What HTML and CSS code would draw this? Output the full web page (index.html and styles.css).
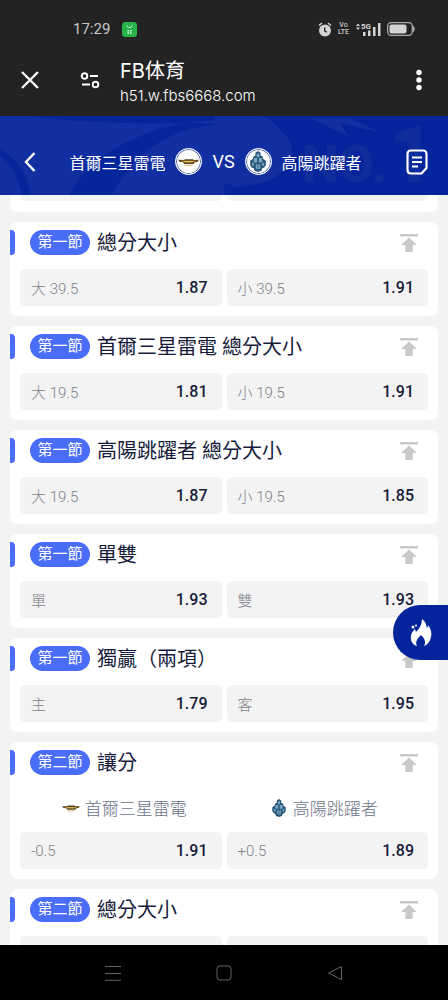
FILE: index.html
```html
<!DOCTYPE html>
<html lang="zh-Hant">
<head>
<meta charset="utf-8">
<meta name="viewport" content="width=device-width, initial-scale=1">
<title>FB体育</title>
<link rel="stylesheet" href="styles.css">
</head>
<body>
<svg class="sprite" aria-hidden="true">
  <symbol id="to-top" viewBox="0 0 20 20"><path d="M1 1h18v2.400H1zM10 4.600l8 7.400h-4.300v7H6.300v-7H2z" fill="#c9c9c9"/></symbol>
  <symbol id="thunders" viewBox="0 0 24 12"><path d="M0 3.500l7 .3 1-1h9l1 1 6-.3-2 2.500-3 .4-1 2H7L6 6.400 2 6z" fill="#57451f"/><path d="M3 4.600l18-.1-2 1.100H5z" fill="#c98a2e"/><path d="M7 5h10v1.500H7z" fill="#e2c25c"/><path d="M7 9h10l-1 1.500H8z" fill="#e9b9a8"/></symbol>
  <symbol id="jumpers" viewBox="0 0 20 24"><path d="M10 0l3 2v3l2 1 1 3 3 2v5l-2 3-2 .5-1 3-4 1.500-4-1.500-1-3L3 19l-2-3v-5l3-2 1-3 2-1V2z" fill="#285579"/><path d="M8.500 3h3v4h-3zM5.500 8H9v5H5zM11 8h3.500l.5 5h-4zM2.500 13l3 1v3l-2-.5zM17.500 13l-3 1v3l2-.5zM7.500 15h2v6l-2-1zM10.500 15h2v5l-2 1z" fill="#79a8c0"/></symbol>
</svg>

<div class="screen">
  <div class="status">
    <div class="status-side">
      <time>17:29</time>
      <svg width="15" height="15" viewBox="0 0 15 15"><rect width="15" height="15" rx="3.500" fill="#27b24a"/><path d="M4.500 3.500l2 2h2l2-2" fill="none" stroke="#d5f5d9" stroke-width="1"/><path d="M5.500 8h1.500v1.500H5.500zM8 8h1.500v1.500H8zM5.500 10.300h1.500v1.500H5.500zM8 10.300h1.500v1.500H8z" fill="#e5fae7"/></svg>
    </div>
    <div class="status-side status-right">
      <svg width="14" height="15" viewBox="0 0 14 15"><circle cx="7" cy="8.500" r="6" fill="#d4d4d4"/><path d="M1 3.500L4 1M13 3.500L10 1" stroke="#d4d4d4" stroke-width="1.500"/><path d="M6.700 5.500v3.300l2 1.500" fill="none" stroke="#232323" stroke-width="1.300"/></svg>
      <span class="volte"><span>Vo</span><span>LTE</span></span>
      <svg width="26" height="15" viewBox="0 0 26 15"><path d="M1 4l2-2.500L5 4zM1 5.500h4L3 8z" fill="#d4d4d4"/><text x="6" y="7" class="net">5G</text><path d="M8 10h2.500v4H8zM13 8.500h2.500V14H13zM18 5h2.500v9H18zM23 1h2.500v13H23z" fill="#d4d4d4"/></svg>
      <svg width="28" height="14" viewBox="0 0 28 14"><rect x=".7" y=".7" width="24.600" height="12.600" rx="3.500" fill="none" stroke="#aaa" stroke-width="1.300"/><rect x="2.500" y="2.500" width="17" height="9" rx="2" fill="#d4d4d4"/><path d="M26.500 4.500q1.500 2.500 0 5z" fill="#aaa" stroke="#aaa"/></svg>
    </div>
  </div>

  <div class="browser">
    <button class="icon-btn" aria-label="關閉"><svg width="20" height="20" viewBox="0 0 20 20"><path d="M2 2l16 16M18 2L2 18" stroke="#fff" stroke-width="2.300"/></svg></button>
    <button class="icon-btn site" aria-label="網站設定"><svg width="20" height="18" viewBox="0 0 20 18"><g fill="none" stroke="#fff" stroke-width="1.900"><circle cx="4.500" cy="5" r="2.800"/><path d="M10 5h8M2 13.500h8"/><circle cx="15.500" cy="13.500" r="2.800"/></g></svg></button>
    <div class="page-id"><div class="page-name">FB体育</div><div class="page-url">h51.w.fbs6668.com</div></div>
    <button class="icon-btn" aria-label="更多"><svg width="8" height="22" viewBox="0 0 8 22"><g fill="#fff"><circle cx="4" cy="3.500" r="2.700"/><circle cx="4" cy="11" r="2.700"/><circle cx="4" cy="18.500" r="2.700"/></g></svg></button>
  </div>

  <header class="match">
    <svg class="match-bg" viewBox="0 0 448 79" preserveAspectRatio="none" aria-hidden="true">
      <rect width="448" height="79" fill="#03249b"/>
      <path d="M0 0h262q13 5 18 14 12 8 12 22 0 14-12 22-10 8-24 10L224 74v5H0z" fill="#112fa0"/>
      <path d="M30 0q60 9 185 7v-7zM70 79q15-37 75-61 35-13 70-14v5Q145 15 112 79zM0 34q24 10 31 45H22Q16 50 0 40zM224 67l20 6-20 5z" fill="#05259a"/>
      <path d="M310 2l38 18-8-13 42 10-32-15z" fill="#112fa0"/>
      <g class="rank"><text x="302" y="66" class="rank-no">NO.</text><text x="388" y="66" class="rank-one">1</text></g>
    </svg>
    <button class="icon-btn" aria-label="返回"><svg width="14" height="22" viewBox="0 0 14 22"><path d="M11.500 2L3 11l8.500 9" fill="none" stroke="#fff" stroke-width="2.400"/></svg></button>
    <h1 class="teams">
      <span>首爾三星雷電</span>
      <span class="crest"><svg width="21" height="14"><use href="#thunders"/></svg></span>
      <span class="vs">VS</span>
      <span class="crest"><svg width="18" height="21"><use href="#jumpers"/></svg></span>
      <span>高陽跳躍者</span>
    </h1>
    <button class="icon-btn" aria-label="注單"><svg width="22" height="26" viewBox="0 0 22 26"><path d="M5 1.500h12q3.500 0 3.500 3.500v14l-5 5.500H5q-3.500 0-3.500-3.500V5q0-3.500 3.500-3.500z" fill="none" stroke="#fff" stroke-width="2.200" stroke-linejoin="round"/><path d="M6 8.500h10M6 13h10M6 17.500h6" stroke="#fff" stroke-width="2"/></svg></button>
  </header>

  <main class="markets">
    <section class="card tail"><div class="odds"><span class="stub"></span><span class="stub"></span></div></section>

    <section class="card">
      <div class="head"><span class="period">第一節</span><h2>總分大小</h2><button class="pin" aria-label="置頂"><svg width="20" height="20"><use href="#to-top"/></svg></button></div>
      <div class="odds"><button class="odd"><span>大 39.5</span><b>1.87</b></button><button class="odd"><span>小 39.5</span><b>1.91</b></button></div>
    </section>

    <section class="card">
      <div class="head"><span class="period">第一節</span><h2>首爾三星雷電 總分大小</h2><button class="pin" aria-label="置頂"><svg width="20" height="20"><use href="#to-top"/></svg></button></div>
      <div class="odds"><button class="odd"><span>大 19.5</span><b>1.81</b></button><button class="odd"><span>小 19.5</span><b>1.91</b></button></div>
    </section>

    <section class="card">
      <div class="head"><span class="period">第一節</span><h2>高陽跳躍者 總分大小</h2><button class="pin" aria-label="置頂"><svg width="20" height="20"><use href="#to-top"/></svg></button></div>
      <div class="odds"><button class="odd"><span>大 19.5</span><b>1.87</b></button><button class="odd"><span>小 19.5</span><b>1.85</b></button></div>
    </section>

    <section class="card">
      <div class="head"><span class="period">第一節</span><h2>單雙</h2><button class="pin" aria-label="置頂"><svg width="20" height="20"><use href="#to-top"/></svg></button></div>
      <div class="odds"><button class="odd"><span>單</span><b>1.93</b></button><button class="odd"><span>雙</span><b>1.93</b></button></div>
    </section>

    <section class="card">
      <div class="head"><span class="period">第一節</span><h2>獨贏（兩項）</h2><button class="pin" aria-label="置頂"><svg width="20" height="20"><use href="#to-top"/></svg></button></div>
      <div class="odds"><button class="odd"><span>主</span><b>1.79</b></button><button class="odd"><span>客</span><b>1.95</b></button></div>
    </section>

    <section class="card">
      <div class="head"><span class="period">第二節</span><h2>讓分</h2><button class="pin" aria-label="置頂"><svg width="20" height="20"><use href="#to-top"/></svg></button></div>
      <div class="sides">
        <div class="side"><svg width="18" height="18"><use href="#thunders"/></svg><span>首爾三星雷電</span></div>
        <div class="side"><svg width="18" height="18"><use href="#jumpers"/></svg><span>高陽跳躍者</span></div>
      </div>
      <div class="odds"><button class="odd"><span>-0.5</span><b>1.91</b></button><button class="odd"><span>+0.5</span><b>1.89</b></button></div>
    </section>

    <section class="card">
      <div class="head"><span class="period">第二節</span><h2>總分大小</h2><button class="pin" aria-label="置頂"><svg width="20" height="20"><use href="#to-top"/></svg></button></div>
      <div class="odds"><span class="stub"></span><span class="stub"></span></div>
    </section>

    <button class="hot" aria-label="熱門"><svg width="24" height="30" viewBox="0 0 24 30"><path d="M13 1c5 4 4 7 5 9 1-1 1-2 1-3 3 4 4 8 3 12-1 5-4 8-7 9 2-4 1-7-3-11-4 4-6 7-4 11-4-1-7-5-6-10 0-3 2-5 4-7l1 3c4-4 6-8 6-13z" fill="#fff"/><path d="M12 19c3 3 3 6 0 9-2-3-2-6 0-9z" fill="#03249b"/><circle cx="4" cy="9" r="1.500" fill="#fff"/><circle cx="7" cy="7.500" r="1" fill="#fff"/></svg></button>
  </main>

  <nav class="system">
    <button class="icon-btn" aria-label="最近"><svg width="16" height="16" viewBox="0 0 16 16"><path d="M0 1.500h16M0 8.500h16M0 15.300h16" stroke="#626262" stroke-width="1"/></svg></button>
    <button class="icon-btn" aria-label="主頁"><svg width="16" height="16" viewBox="0 0 16 16"><rect x="1" y="1" width="14" height="14" rx="3" fill="none" stroke="#626262"/></svg></button>
    <button class="icon-btn" aria-label="上一頁"><svg width="16" height="16" viewBox="0 0 16 16"><path d="M14.500 1.500v13L1.500 8z" fill="none" stroke="#626262" stroke-linejoin="round"/></svg></button>
  </nav>
</div>
</body>
</html>
```
FILE: styles.css
```css
* { box-sizing: border-box; }

body {
  margin: 0;
  background: #000;
  font-family: Roboto, "Noto Sans CJK TC", sans-serif;
}

button {
  margin: 0;
  padding: 0;
  border: 0;
  background: none;
  color: inherit;
  font: inherit;
  cursor: pointer;
}

svg { display: block; flex: none; }

.sprite { position: absolute; width: 0; height: 0; }

.screen {
  display: flex;
  flex-direction: column;
  height: 100vh;
  overflow: hidden;
}

.icon-btn {
  display: flex;
  flex: none;
  align-items: center;
  justify-content: center;
  width: 40px;
  height: 40px;
}

/* Phone status bar */
.status {
  display: flex;
  flex: none;
  justify-content: space-between;
  align-items: center;
  height: 48px;
  padding: 10px 33px 0 73px;
  background: #232323;
  color: #c6c6c6;
}

.status-side { display: flex; align-items: center; gap: 12px; font-size: 15px; }
.status-right { gap: 6px; }
.volte {
  display: flex;
  flex-direction: column;
  align-items: center;
  width: 11px;
  font: 500 7px/7px Roboto, sans-serif;
}
.net { font: bold 8px Roboto, sans-serif; fill: #d4d4d4; }

/* Browser bar */
.browser {
  display: flex;
  flex: none;
  align-items: center;
  height: 68px;
  padding: 0 9px 4px 10px;
  background: #232323;
  color: #fff;
}
.site { margin-left: 20px; }
.page-id { flex: 1; min-width: 0; padding: 5px 0 0 10px; }
.page-name { font: 400 20px/26px Inter, "Noto Sans CJK SC", sans-serif; }
.page-url { font: 300 15px/24px Inter, sans-serif; }

/* Match header */
.match {
  position: relative;
  display: flex;
  flex: none;
  align-items: center;
  height: 79px;
  padding: 12px 11px 0 10px;
  background: #03249b;
  color: #fff;
}
.match-bg {
  position: absolute;
  inset: 0;
  width: 100%;
  height: 100%;
  overflow: visible;
}
.match > button, .teams { position: relative; }
.rank { fill: #0f2c9d; font-family: Roboto, sans-serif; font-weight: 900; }
.rank-no { font-size: 52px; }
.rank-one { font-size: 80px; }
.teams {
  display: flex;
  flex: 1;
  align-items: center;
  justify-content: center;
  gap: 10px;
  margin: 0;
  padding-right: 16px;
  font-size: 16px;
  font-weight: 400;
  white-space: nowrap;
}
.vs { font-size: 18px; }
.crest {
  display: flex;
  align-items: center;
  justify-content: center;
  width: 27px;
  height: 27px;
  border: 1px solid #fff;
  border-radius: 50%;
  background: #fff;
  box-shadow: inset 0 0 0 1px #4d62b5;
}

/* Market list */
.markets {
  position: relative;
  display: flex;
  flex: 1;
  flex-direction: column;
  gap: 10px;
  min-height: 0;
  overflow: hidden;
  padding: 0 10px;
  background: #f3f3f3;
  color: #171b3b;
}
.card {
  flex: none;
  padding: 8px 10px 10px;
  border-radius: 8px;
  background: #fff;
}
.card.tail { height: 17px; padding-top: 0; border-radius: 0 0 8px 8px; }
.tail .stub { height: 6px; border-radius: 0 0 5px 5px; }

.head {
  display: flex;
  align-items: center;
  height: 25px;
  margin: 0 0 14px -10px;
}
.head::before {
  content: "";
  width: 5px;
  height: 25px;
  margin-right: 15px;
  border-radius: 0 4px 4px 0;
  background: #4a6df8;
}
.period {
  flex: none;
  width: 60px;
  border-radius: 13px;
  background: #4a6df8;
  color: #fff;
  font-size: 15px;
  line-height: 25px;
  text-align: center;
}
h2 {
  flex: 1;
  min-width: 0;
  margin: 0 0 0 7px;
  padding-top: 2px;
  font-size: 20px;
  font-weight: 400;
  line-height: 25px;
  white-space: nowrap;
}
.pin { margin-right: 9px; }

.odds, .sides { display: grid; grid-template-columns: 1fr 1fr; gap: 5px; }
.odd, .stub { height: 37px; border-radius: 5px; background: #f3f3f3; }
.odd {
  display: flex;
  align-items: center;
  justify-content: space-between;
  padding: 0 14px 0 11px;
}
.odd span { color: #808288; font-size: 15px; font-weight: 300; }
.odd b { font-size: 16px; font-weight: 500; }
.sides { height: 43px; padding: 0 7px 6px; }
.side {
  display: flex;
  align-items: center;
  justify-content: center;
  gap: 5px;
  color: #6b7488;
  font-size: 17px;
  font-weight: 300;
}

/* Floating shortcut */
.hot {
  position: absolute;
  top: 410px;
  right: 0;
  display: flex;
  align-items: center;
  justify-content: center;
  width: 55px;
  height: 55px;
  border-radius: 28px 0 0 28px;
  background: #03249b;
}

/* System navigation */
.system {
  display: flex;
  flex: none;
  align-items: center;
  justify-content: center;
  gap: 71px;
  height: 55px;
  background: #000;
}
```
